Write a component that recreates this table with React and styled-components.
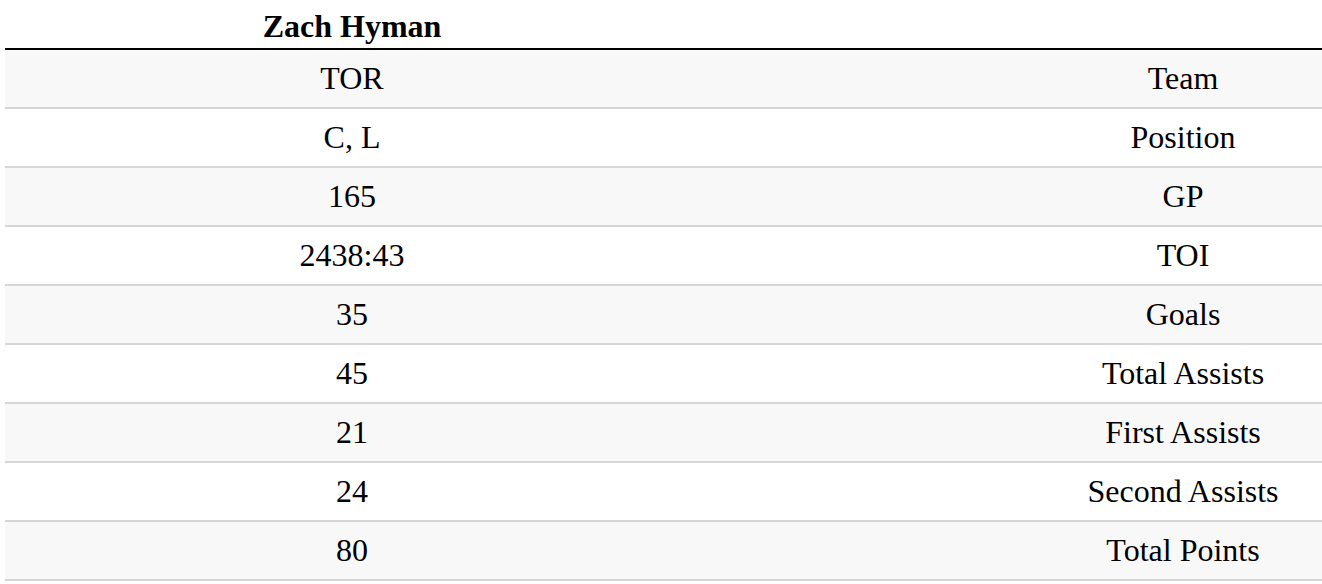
import React from 'react';
import styled, { createGlobalStyle } from 'styled-components';

const GlobalStyle = createGlobalStyle`
  html, body {
    margin: 0;
    padding: 0;
    background: #ffffff;
    overflow: hidden;
  }
  body {
    font-family: "Liberation Serif", "Times New Roman", serif;
    color: #000000;
  }
`;

const Page = styled.div`
  padding: 4px 0 0 5px;
  width: 1322px;
  box-sizing: border-box;
  overflow: hidden;
`;

const Table = styled.table`
  width: 1662px;
  border-collapse: collapse;
  font-size: 32px;
`;

const HeadCell = styled.th`
  width: ${({ wide }) => (wide ? '968px' : '694px')};
  padding: 5px 0;
  line-height: 34px;
  font-weight: bold;
  text-align: center;
  border-bottom: 2px solid #000000;
`;

const Row = styled.tr`
  background: ${({ striped }) => (striped ? '#f8f8f8' : '#ffffff')};
  border-bottom: 2px solid #d6d6d6;
`;

const Cell = styled.td`
  padding: 10px 0;
  line-height: 37px;
  text-align: center;
`;

const stats = [
  ['TOR', 'Team'],
  ['C, L', 'Position'],
  ['165', 'GP'],
  ['2438:43', 'TOI'],
  ['35', 'Goals'],
  ['45', 'Total Assists'],
  ['21', 'First Assists'],
  ['24', 'Second Assists'],
  ['80', 'Total Points'],
];

const App = () => (
  <Page>
    <GlobalStyle />
    <Table>
      <thead>
        <tr>
          <HeadCell>Zach Hyman</HeadCell>
          <HeadCell wide />
        </tr>
      </thead>
      <tbody>
        {stats.map(([value, label], i) => (
          <Row key={label} striped={i % 2 === 0}>
            <Cell>{value}</Cell>
            <Cell>{label}</Cell>
          </Row>
        ))}
      </tbody>
    </Table>
  </Page>
);

export default App;
